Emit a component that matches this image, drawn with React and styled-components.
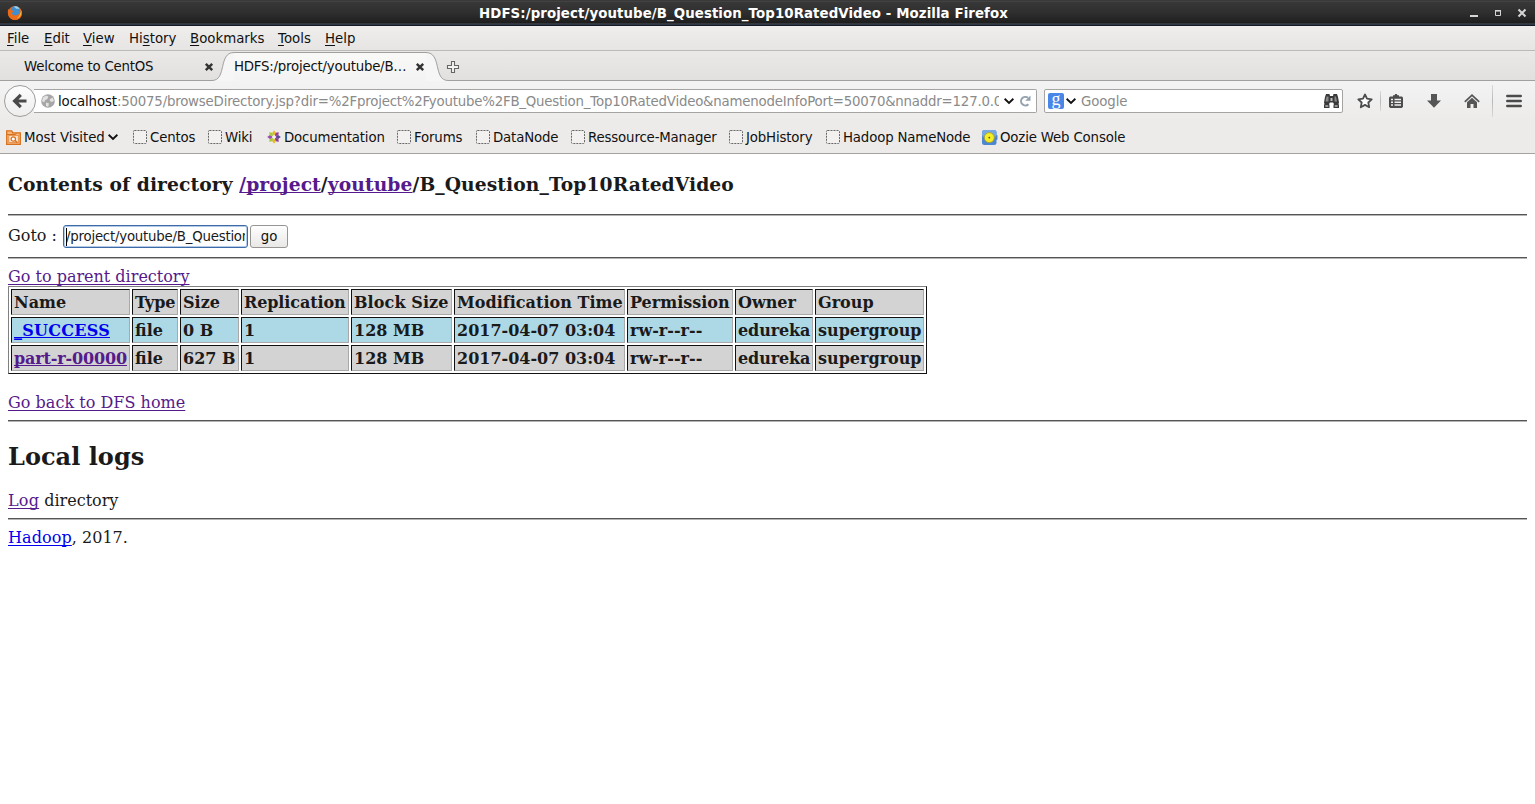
import React from "react";
import styled, { createGlobalStyle } from "styled-components";

const GlobalStyle = createGlobalStyle`
  html, body { margin: 0; padding: 0; background: #fff; overflow: hidden; }
  * { box-sizing: border-box; }
  svg { flex: none; display: block; }
`;

const Window = styled.div`
  width: 1535px;
  height: 804px;
  display: flex;
  flex-direction: column;
  overflow: hidden;
  background: #fff;
  font: 13.33px/18px "DejaVu Sans", sans-serif;
  color: #111;
`;

const TitleBar = styled.header`
  height: 26px;
  flex: none;
  display: flex;
  align-items: center;
  padding: 0 7px;
  background: linear-gradient(#262626 0, #4c4c4c 1px, #383838 2px, #2e2e2e 13px, #1e1e1e 23px, #4a525a 24px, #16202c 25px, #0c1420 26px);
`;

const WindowTitle = styled.h1`
  flex: 1;
  margin: 0;
  padding: 2px 0 0 456px;
  font-size: 13.33px;
  line-height: 24px;
  font-weight: bold;
  color: #fff;
  white-space: nowrap;
  letter-spacing: 0.09px;
`;

const MenuBar = styled.nav`
  height: 25px;
  flex: none;
  display: flex;
  padding-left: 7px;
  background: linear-gradient(#efeeed, #e6e5e4);
  border-bottom: 1px solid #bcbab8;
`;

const MenuItem = styled.span`
  width: ${(p) => p.$w}px;
  line-height: 25px;
  white-space: nowrap;
  u { text-underline-offset: 2px; text-decoration-thickness: 1px; text-decoration-skip-ink: none; }
`;

const TabStrip = styled.div`
  height: 30px;
  flex: none;
  display: flex;
  background: linear-gradient(#eae9e8, #e1e0df);
`;

const InactiveTab = styled.div`
  width: 212px;
  display: flex;
  align-items: center;
  gap: 51px;
  padding: 2px 0 0 24px;
  border-bottom: 1px solid #a1a09e;
`;

const ActiveTab = styled.div`
  display: flex;
  width: 236px;
`;

const ActiveTabBody = styled.div`
  flex: 1;
  margin-top: 1px;
  padding: 0 1px 1px 0;
  display: flex;
  align-items: center;
  justify-content: space-between;
  border-top: 1px solid #a1a09e;
  background: linear-gradient(#f9f9f8, #f4f3f3);
`;

const TabLabel = styled.span`
  width: ${(p) => p.$w}px;
  white-space: nowrap;
  letter-spacing: -0.22px;
`;

const StripRest = styled.div`
  flex: 1;
  display: flex;
  align-items: center;
  padding-top: 2px;
  border-bottom: 1px solid #a1a09e;
  svg { margin-left: -2px; }
`;

const NavBar = styled.div`
  height: 40px;
  flex: none;
  display: flex;
  align-items: center;
  padding-left: 4px;
  background: linear-gradient(#f4f3f3, #ecebea);
`;

const BackButton = styled.button`
  width: 32px;
  height: 32px;
  flex: none;
  display: grid;
  place-items: center;
  padding: 0;
  border: 1px solid #9f9d9b;
  border-radius: 50%;
  background: linear-gradient(#fdfdfd, #efeeed);
  z-index: 1;
`;

const UrlBar = styled.div`
  width: 1003px;
  height: 24px;
  flex: none;
  margin-left: -2px;
  display: flex;
  align-items: center;
  padding-left: 7px;
  border: 1px solid #a6a4a2;
  border-left: 0;
  border-radius: 0 2px 2px 0;
  background: #fff;
`;

const UrlText = styled.span`
  width: 941px;
  flex: none;
  margin: 0 5px 0 3px;
  padding-top: 2px;
  overflow: hidden;
  white-space: nowrap;
  color: #8a8a8a;
  letter-spacing: -0.2px;
  b { font-weight: normal; color: #111; letter-spacing: -0.1px; }
`;

const SearchBar = styled.div`
  width: 299px;
  height: 24px;
  flex: none;
  margin-left: 7px;
  display: flex;
  align-items: center;
  padding: 0 2px 0 3px;
  border: 1px solid #a6a4a2;
  border-radius: 2px;
  background: #fff;
`;

const SearchEngine = styled.span`
  width: 16px;
  height: 16px;
  flex: none;
  margin-right: 2px;
  border-radius: 2px;
  background: #4a86e8;
  color: #fff;
  font: 18px/12px "Liberation Serif", serif;
  text-align: center;
`;

const SearchHint = styled.span`
  flex: 1;
  margin-left: 5px;
  padding-top: 2px;
  color: #8a8a8a;
  letter-spacing: -0.1px;
`;

const ToolIcons = styled.div`
  display: flex;
  align-items: center;
  height: 32px;
`;

const ToolSlot = styled.span`
  width: ${(p) => p.$w}px;
  height: 100%;
  padding-left: ${(p) => p.$pad || 0}px;
  flex: none;
  display: grid;
  place-items: center;
`;

const Divider = styled.i`
  width: 1px;
  height: ${(p) => p.$h}px;
  margin-left: ${(p) => p.$before || 0}px;
  background: linear-gradient(#d9d8d7, #b9b8b6, #d9d8d7);
`;

const BookmarkBar = styled.div`
  height: 33px;
  flex: none;
  display: flex;
  align-items: center;
  padding-left: 6px;
  background: #ecebea;
  border-bottom: 1px solid #a5a3a1;
`;

const Bookmark = styled.span`
  width: ${(p) => p.$w}px;
  flex: none;
  display: flex;
  align-items: center;
  gap: ${(p) => p.$gap ?? 3}px;
  white-space: nowrap;
  letter-spacing: ${(p) => p.$ls ?? -0.16}px;
`;

const BookmarkLabel = styled.span`
  padding-top: 2px;
`;

const Page = styled.main`
  flex: 1;
  padding: 0 8px;
  font: 16px/19px "DejaVu Serif", serif;
  color: #1a1a1a;
`;

const Line = styled.div`
  height: ${(p) => p.$h}px;
  padding-top: ${(p) => p.$top}px;
  white-space: nowrap;
`;

const Heading = styled.h2`
  height: ${(p) => p.$h}px;
  margin: 0;
  padding-top: ${(p) => p.$top}px;
  font-size: ${(p) => p.$size}px;
  line-height: 28px;
  font-weight: bold;
  white-space: nowrap;
  letter-spacing: ${(p) => p.$ls || 0}px;
`;

const Rule = styled.hr`
  height: 2px;
  margin: 0;
  border: 0;
  width: 1519px;
  border-top: 1px solid #555;
  border-bottom: 1px solid #b5b5b5;
`;

const Link = styled.a`
  color: ${(p) => (p.$fresh ? "#0000ee" : "#551a8b")};
  text-decoration: underline;
  text-decoration-thickness: 1px;
  text-underline-offset: ${(p) => p.$offset ?? 2}px;
  text-decoration-skip-ink: none;
  letter-spacing: ${(p) => (p.$ls === undefined ? "inherit" : `${p.$ls}px`)};
`;

const GotoForm = styled.div`
  height: 41px;
  display: flex;
  align-items: center;
  white-space: pre;
`;

const GotoLabel = styled.span`
  width: 55px;
  padding-bottom: 2px;
`;

const PathField = styled.div`
  width: 185px;
  height: 23px;
  display: flex;
  align-items: center;
  padding: 0 2px;
  border: 1px solid #3e6aa8;
  box-shadow: inset 0 0 0 1px #b4cbe8;
  border-radius: 3px;
  background: #fff;
  font: 13.33px/18px "DejaVu Sans", sans-serif;
`;

const PathText = styled.span`
  overflow: hidden;
  border-left: 1px solid #000;
  text-indent: -1px;
  letter-spacing: -0.22px;
`;

const GoButton = styled.button`
  width: 38px;
  height: 23px;
  margin-left: 2px;
  padding: 0;
  border: 1px solid #979593;
  border-radius: 3px;
  background: linear-gradient(#fefefe, #e9e8e7);
  font: 13.33px/18px "DejaVu Sans", sans-serif;
  color: #111;
`;

const FileTable = styled.table`
  width: 919px;
  table-layout: fixed;
  border-collapse: separate;
  border-spacing: 2px;
  border: 1px solid #111;
  border-top-color: #808080;
  border-left-color: #808080;
  font-weight: bold;
`;

const Row = styled.tr`
  height: 26px;
  background: ${(p) => (p.$blue ? "#add8e6" : "#d3d3d3")};
`;

const Cell = styled.td`
  height: 26px;
  padding: 1px 0 0 2px;
  line-height: 19px;
  border: 1px solid #a9a9a9;
  border-top-color: #111;
  border-left-color: #111;
  white-space: nowrap;
  letter-spacing: ${(p) => p.$ls || 0}px;
`;

const CloseIcon = () => (
  <svg width="10" height="10" viewBox="0 0 10 10">
    <path d="M1.800 1.800 8.200 8.200M8.200 1.800 1.800 8.200" stroke="#333" strokeWidth="2.400" />
  </svg>
);

const Chevron = () => (
  <svg width="10" height="8" viewBox="0 0 10 8">
    <path d="M0.600 1.800 5 6 9.400 1.800" fill="none" stroke="#111" strokeWidth="1.900" />
  </svg>
);

const WindowControls = () => (
  <svg width="60" height="14" viewBox="0 0 60 14">
    <path d="M2 10h8" stroke="#d5d5d5" strokeWidth="2" />
    <path d="M27.500 4.500h5v5h-5z" fill="none" stroke="#d5d5d5" />
    <path d="M27 4.800h6" stroke="#d5d5d5" strokeWidth="1.600" />
    <path d="m50.500 3.500 7 7M57.500 3.500l-7 7" stroke="#d5d5d5" strokeWidth="2" />
  </svg>
);

const FirefoxIcon = () => (
  <svg width="16" height="16" viewBox="0 0 16 16">
    <circle cx="8" cy="8" r="7" fill="#e36a1c" />
    <circle cx="8.400" cy="6.300" r="5" fill="#3f8fd0" />
    <path d="M7 1.400c3-.5 5 .8 5.600 3.200-.8-.8-1.600-.8-2.400-.8-1-.2-1.800-1-3.200-2.400z" fill="#9ed5ec" />
    <path d="M1.400 4c.8 1 2 .8 3.400 1.200 1.200.2 1.600 1 1.200 1.800-.6.6-1.400.8-1 1.800 1 2 4 2.200 6.200.8 2-1.400 2.400-3.600 2-5.600 1.800 1.800 2.200 4.800 1 7.200-1.400 3-4.600 4.300-7.600 3.600C2 13.800-.4 8.600 1.400 4z" fill="#ec6b18" />
    <path d="M14.100 5.500c.8 3.500-1 7-4.300 8 2.600-2 3.900-4.700 4.300-8z" fill="#ffd24a" />
  </svg>
);

const BlankIcon = () => (
  <svg width="14" height="14" viewBox="0 0 14 14">
    <rect x=".5" y=".5" width="13" height="13" rx="1" fill="#f2f1f0" stroke="#666" strokeDasharray="2 1" />
  </svg>
);

const GlobeIcon = () => (
  <svg width="14" height="14" viewBox="0 0 14 14">
    <circle cx="7" cy="7" r="6.800" fill="#a6a6a6" />
    <path d="M2 3.500 5 1.500l2.400 1-1 2.500-2.400 1.200-.8 2.300L1 7zM8.500 5.500l3-2 1.500 3-2 1.500-1.500-.5zM5 8.500l3 1-.8 3.200L5 12z" fill="#e2e2e2" />
  </svg>
);

const FolderIcon = () => (
  <svg width="15" height="15" viewBox="0 0 15 15">
    <path d="M.7 14.300V.8h5l1 2h7.600v11.500z" fill="#f5b57c" stroke="#d9701b" strokeWidth="1.300" />
    <path d="M1 4.500h8.500l1-1.500" fill="none" stroke="#d9701b" />
    <rect x="2.800" y="5.500" width="9.500" height="7" fill="#fbe3cc" stroke="#e08a40" strokeWidth=".8" />
    <circle cx="7.300" cy="9" r="2.200" fill="#fff" stroke="#d9701b" strokeWidth="1.200" />
    <path d="m9 10.600 2.400 2.200" stroke="#d9701b" strokeWidth="1.300" />
  </svg>
);

const PETALS = ["#e8b923", "#9c3b8e", "#5b4a92", "#8f3b8e", "#e8b923", "#a6c83c", "#9c4bb0", "#a6c83c"];
const CentosIcon = () => (
  <svg width="14" height="14" viewBox="0 0 14 14">
    {PETALS.map((color, i) => (
      <path key={i} d="M7 6 5.100 2.900 7 .2l1.900 2.700z" fill={color} transform={`rotate(${i * 45} 7 7)`} />
    ))}
    <circle cx="7" cy="7" r="1.800" fill="#f8ecf4" />
  </svg>
);

const OozieIcon = () => (
  <svg width="16" height="15" viewBox="0 0 16 15">
    <rect x="0" y="0" width="14.500" height="15" rx="2.500" fill="#4c87cf" />
    <rect x="0" y="0" width="14.500" height="7" rx="2.500" fill="#76a9e2" />
    <rect x="14" y="5" width="1.500" height="5" rx=".8" fill="#4c87cf" />
    <circle cx="7.300" cy="7.600" r="5" fill="#f4ee22" stroke="#a49a3a" strokeWidth=".9" />
    <circle cx="7.300" cy="7.600" r=".9" fill="#5a4a10" />
  </svg>
);

const BackIcon = () => (
  <svg width="16" height="16" viewBox="0 0 16 16">
    <path d="M8.800 1.800 2.600 8l6.200 6.200M3 8h11.500" fill="none" stroke="#4a4a4a" strokeWidth="3.200" />
  </svg>
);

const ReloadIcon = () => (
  <svg width="12" height="12" viewBox="0 0 12 12">
    <path d="M9.400 9.200A4.300 4.300 0 1 1 9 2.800" fill="none" stroke="#94a0ae" strokeWidth="2" />
    <path d="M11.500.5v5.200H6.300z" fill="#94a0ae" />
  </svg>
);

const BinocularsIcon = () => (
  <svg width="17" height="16" viewBox="0 0 17 16">
    <path d="M3 1h3.500l.5 2h3l.5-2H14l1 3 1 5.500-.5 1.500.5 1v3h-5.500v-3l.5-1-1-1.500H7L6 11l.5 1v3H1v-3l.5-1L1 9.500 2 4z" fill="#3a3a3a" />
    <path d="M3.500 3.500h2v5h-3zM11.500 3.500h1.500l1 5h-2.500z" fill="#8a8a8a" />
    <path d="M2.300 12.300h3v1.500h-3zM11.700 12.300h3v1.500h-3z" fill="#b5b5b5" />
    <rect x="7.500" y="5" width="2" height="3" fill="#bbb" />
  </svg>
);

const StarIcon = () => (
  <svg width="16" height="16" viewBox="0 0 16 16">
    <path d="m8 1.500 2 4.200 4.700.6-3.400 3.200.9 4.700L8 11.900l-4.200 2.300.9-4.700-3.400-3.200 4.700-.6z" fill="#fff" stroke="#4d4d4d" strokeWidth="1.800" strokeLinejoin="round" />
  </svg>
);

const ClipboardIcon = () => (
  <svg width="16" height="16" viewBox="0 0 16 16">
    <path d="M5 3.500V2.300h1.500L7.200 1h1.600l.7 1.300H11v1.200h3l1 1.200v9L13.800 15H2.200L1 13.700v-9l1-1.200z" fill="#4d4d4d" />
    <path d="M3 5.800h2v1.500H3zM6.500 5.800H13v1.500H6.500zM3 8.500h2V10H3zM6.500 8.500H13V10H6.500zM3 11.300h2v1.500H3zM6.500 11.300H13v1.500H6.500z" fill="#f1f0ef" />
  </svg>
);

const DownloadIcon = () => (
  <svg width="16" height="16" viewBox="0 0 16 16">
    <path d="M5 1h6v6.500h4L8 14.800 1 7.500h4z" fill="#555" />
  </svg>
);

const HomeIcon = () => (
  <svg width="16" height="16" viewBox="0 0 16 16">
    <path d="M.8 8.800 8 2.200l7.200 6.600" fill="none" stroke="#555" strokeWidth="1.700" />
    <path d="M3 9.200 8 4.800l5 4.400V15H9.500v-4h-3v4H3z" fill="#555" />
  </svg>
);

const MenuIcon = () => (
  <svg width="16" height="14" viewBox="0 0 16 14">
    <path d="M1.300 2h13.400M1.300 7h13.400M1.300 12h13.400" stroke="#4a4a4a" strokeWidth="2.500" strokeLinecap="round" />
  </svg>
);

const PlusIcon = () => (
  <svg width="14" height="14" viewBox="0 0 14 14">
    <path d="M5.500 1.500h3v4h4v3h-4v4h-3v-4h-4v-3h4z" fill="#f4f4f3" stroke="#666" strokeWidth="1.100" />
  </svg>
);

const TabCurveLeft = () => (
  <svg width="22" height="30" viewBox="0 0 22 30">
    <path d="M0 29.500C15 29.500 6 1.500 22 1.500V30H0z" fill="#f7f6f6" />
    <path d="M0 29.500C15 29.500 6 1.500 22 1.500" fill="none" stroke="#a1a09e" />
  </svg>
);

const TabCurveRight = () => (
  <svg width="22" height="30" viewBox="0 0 22 30">
    <path d="M0 1.500C16 1.500 7 29.500 22 29.500V30H0z" fill="#f7f6f6" />
    <path d="M0 1.500C16 1.500 7 29.500 22 29.500" fill="none" stroke="#a1a09e" />
  </svg>
);

const MENUS = [
  ["", "F", "ile", 37],
  ["", "E", "dit", 39],
  ["", "V", "iew", 46],
  ["Hi", "s", "tory", 61],
  ["", "B", "ookmarks", 88],
  ["", "T", "ools", 47],
  ["", "H", "elp", 40],
];

const BOOKMARKS = [
  ["Centos", 75, BlankIcon],
  ["Wiki", 59, BlankIcon],
  ["Documentation", 130, CentosIcon],
  ["Forums", 79, BlankIcon],
  ["DataNode", 95, BlankIcon],
  ["Ressource-Manager", 158, BlankIcon],
  ["JobHistory", 97, BlankIcon],
  ["Hadoop NameNode", 156, BlankIcon],
  ["Oozie Web Console", 150, OozieIcon, 2],
];

const COLUMNS = [
  ["Name", 119],
  ["Type", 46, -0.15],
  ["Size", 59],
  ["Replication", 108, -0.1],
  ["Block Size", 101, 0.1],
  ["Modification Time", 171, 0.03],
  ["Permission", 106],
  ["Owner", 78],
  ["Group", 109],
];

const FILES = [
  { name: "_SUCCESS", ls: 0.25, fresh: true, cells: ["file", "0 B", "1", "128 MB", "2017-04-07 03:04", "rw-r--r--", "edureka", "supergroup"] },
  { name: "part-r-00000", ls: -0.15, fresh: false, cells: ["file", "627 B", "1", "128 MB", "2017-04-07 03:04", "rw-r--r--", "edureka", "supergroup"] },
];

export default function App() {
  return (
    <Window>
      <GlobalStyle />
      <TitleBar>
        <FirefoxIcon />
        <WindowTitle>HDFS:/project/youtube/B_Question_Top10RatedVideo - Mozilla Firefox</WindowTitle>
        <WindowControls />
      </TitleBar>
      <MenuBar>
        {MENUS.map(([before, key, after, w]) => (
          <MenuItem key={key} $w={w}>{before}<u>{key}</u>{after}</MenuItem>
        ))}
      </MenuBar>
      <TabStrip>
        <InactiveTab>
          <TabLabel $w={130}>Welcome to CentOS</TabLabel>
          <CloseIcon />
        </InactiveTab>
        <ActiveTab>
          <TabCurveLeft />
          <ActiveTabBody>
            <TabLabel $w={174}>HDFS:/project/youtube/B…</TabLabel>
            <CloseIcon />
          </ActiveTabBody>
          <TabCurveRight />
        </ActiveTab>
        <StripRest><PlusIcon /></StripRest>
      </TabStrip>
      <NavBar>
        <BackButton><BackIcon /></BackButton>
        <UrlBar>
          <GlobeIcon />
          <UrlText>
            <b>localhost</b>:50075/browseDirectory.jsp?dir=%2Fproject%2Fyoutube%2FB_Question_Top10RatedVideo&amp;namenodeInfoPort=50070&amp;nnaddr=127.0.0
          </UrlText>
          <Chevron />
          <ToolSlot $w={22}><ReloadIcon /></ToolSlot>
        </UrlBar>
        <SearchBar>
          <SearchEngine>g</SearchEngine>
          <Chevron />
          <SearchHint>Google</SearchHint>
          <BinocularsIcon />
        </SearchBar>
        <ToolIcons>
          <ToolSlot $w={37} $pad={7}><StarIcon /></ToolSlot>
          <Divider $h={20} />
          <ToolSlot $w={30}><ClipboardIcon /></ToolSlot>
          <ToolSlot $w={45}><DownloadIcon /></ToolSlot>
          <ToolSlot $w={32}><HomeIcon /></ToolSlot>
          <Divider $h={32} $before={4} />
          <ToolSlot $w={42}><MenuIcon /></ToolSlot>
        </ToolIcons>
      </NavBar>
      <BookmarkBar>
        <Bookmark $w={127} $ls={-0.03}>
          <FolderIcon />
          <BookmarkLabel>Most Visited</BookmarkLabel>
          <Chevron />
        </Bookmark>
        {BOOKMARKS.map(([label, w, Icon, gap]) => (
          <Bookmark key={label} $w={w} $gap={gap}>
            <Icon />
            <BookmarkLabel>{label}</BookmarkLabel>
          </Bookmark>
        ))}
      </BookmarkBar>
      <Page>
        <Heading $h={60} $top={16} $size={18.72} $ls={0.08}>
          Contents of directory <Link $offset={1} href="#">/project</Link>/<Link $offset={1} href="#">youtube</Link>/B_Question_Top10RatedVideo
        </Heading>
        <Rule />
        <GotoForm>
          <GotoLabel>Goto : </GotoLabel>
          <PathField><PathText>/project/youtube/B_Question</PathText></PathField>
          <GoButton>go</GoButton>
        </GotoForm>
        <Rule />
        <Line $h={27} $top={8}><Link href="#">Go to parent directory</Link></Line>
        <FileTable>
          <colgroup>
            {COLUMNS.map(([label, w]) => <col key={label} width={w} />)}
          </colgroup>
          <tbody>
            <Row>{COLUMNS.map(([label, , ls]) => <Cell key={label} $ls={ls}>{label}</Cell>)}</Row>
            {FILES.map((file) => (
              <Row key={file.name} $blue={file.fresh}>
                <Cell><Link href="#" $offset={1} $fresh={file.fresh} $ls={file.ls}>{file.name}</Link></Cell>
                {file.cells.map((text, i) => <Cell key={i} $ls={text === "edureka" ? -0.12 : 0}>{text}</Cell>)}
              </Row>
            ))}
          </tbody>
        </FileTable>
        <Line $h={46} $top={19}><Link href="#" $ls={0.03}>Go back to DFS home</Link></Line>
        <Rule />
        <Heading $h={60} $top={21} $size={24} $ls={0.03}>Local logs</Heading>
        <Line $h={36} $top={9}><Link href="#" $ls={0.2}>Log</Link> directory</Line>
        <Rule />
        <Line $h={36} $top={8}><Link href="#" $fresh $ls={0.1}>Hadoop</Link>, 2017.</Line>
      </Page>
    </Window>
  );
}
